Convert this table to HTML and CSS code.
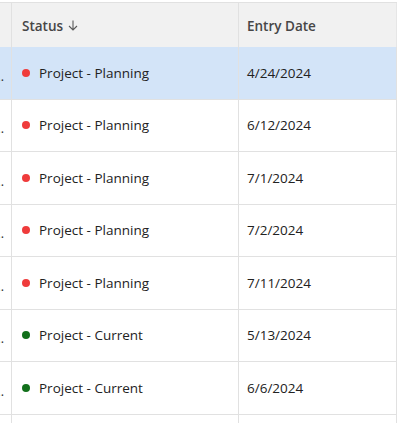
FILE: index.html
```html
<!DOCTYPE html>
<html>
<head>
<meta charset="utf-8">
<link rel="stylesheet" href="styles.css">
</head>
<body>
<div class="table">
  <div class="row head">
    <div class="cell stub"></div>
    <div class="cell">Status <svg class="arrow" width="10" height="11" viewBox="0 0 10 11"><path d="M5 0.5 V10 M1 6 L5 10 L9 6" fill="none" stroke="#5a5a5a" stroke-width="1.1"/></svg></div>
    <div class="cell last">Entry Date</div>
  </div>
  <div class="row selected">
    <div class="cell stub"><span class="clip">…</span></div>
    <div class="cell"><span class="dot red"></span>Project - Planning</div>
    <div class="cell last">4/24/2024</div>
  </div>
  <div class="row">
    <div class="cell stub"><span class="clip">…</span></div>
    <div class="cell"><span class="dot red"></span>Project - Planning</div>
    <div class="cell last">6/12/2024</div>
  </div>
  <div class="row">
    <div class="cell stub"><span class="clip">…</span></div>
    <div class="cell"><span class="dot red"></span>Project - Planning</div>
    <div class="cell last">7/1/2024</div>
  </div>
  <div class="row">
    <div class="cell stub"><span class="clip">…</span></div>
    <div class="cell"><span class="dot red"></span>Project - Planning</div>
    <div class="cell last">7/2/2024</div>
  </div>
  <div class="row">
    <div class="cell stub"><span class="clip">…</span></div>
    <div class="cell"><span class="dot red"></span>Project - Planning</div>
    <div class="cell last">7/11/2024</div>
  </div>
  <div class="row">
    <div class="cell stub"><span class="clip">…</span></div>
    <div class="cell"><span class="dot green"></span>Project - Current</div>
    <div class="cell last">5/13/2024</div>
  </div>
  <div class="row">
    <div class="cell stub"><span class="clip">…</span></div>
    <div class="cell"><span class="dot green"></span>Project - Current</div>
    <div class="cell last">6/6/2024</div>
  </div>
  <div class="row tail">
    <div class="cell stub"></div>
    <div class="cell"></div>
    <div class="cell last"></div>
  </div>
</div>
</body>
</html>
```

FILE: styles.css
```css
html, body {
  margin: 0;
  padding: 0;
  background: #ffffff;
}
body {
  font-family: "Open Sans", "Liberation Sans", sans-serif;
  font-size: 13.5px;
  color: #222222;
  overflow: hidden;
  height: 423px;
}
.table {
  padding-top: 2px;
  height: 421px;
  overflow: hidden;
}
.row {
  display: grid;
  grid-template-columns: 12px 227px 1fr;
  height: 52.5px;
  border-bottom: 1px solid #e1e1e1;
  box-sizing: border-box;
}
.row.head {
  height: 45px;
  background: #f1f1f1;
  border-top: 1px solid #e1e1e1;
  border-bottom: none;
  font-weight: 600;
  color: #464646;
}
.row.head .cell {
  padding-top: 2px;
}
.row.selected {
  background: #d3e4f8;
}
.row.tail {
  height: 8px;
  border-bottom: none;
}
.cell {
  display: flex;
  align-items: center;
  padding-left: 10px;
  border-right: 1px solid #e1e1e1;
  overflow: hidden;
  white-space: nowrap;
}
.cell.last {
  padding-left: 8px;
}
.head .cell.last {
  border-right: 1px solid #e6e6e6;
}
.cell.stub {
  padding-left: 0;
  justify-content: flex-end;
}
.clip {
  margin-right: 7px;
  font-size: 13px;
  color: #333;
  position: relative;
  top: 3px;
}
.arrow {
  margin-left: 5px;
  position: relative;
  top: -1px;
}
.dot {
  width: 8px;
  height: 8px;
  border-radius: 50%;
  margin-right: 9px;
  flex: none;
}
.dot.red { background: #ef3b3b; }
.dot.green { background: #12701b; }
```
